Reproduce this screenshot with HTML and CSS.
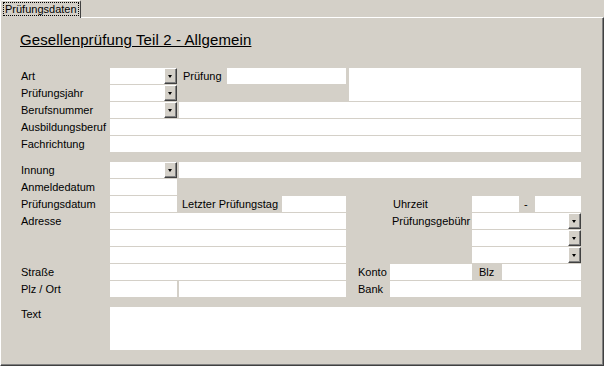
FILE: index.html
```html
<!DOCTYPE html>
<html lang="de">
  <head>
    <meta charset="UTF-8" />
    <meta name="viewport" content="width=device-width, initial-scale=1.0" />
    <title>Prüfungsdaten</title>
    <link rel="stylesheet" href="styles.css">
  </head>
  <body>
    <div class="tabs">
      <div class="tab"><span class="tab--label">Prüfungsdaten</span></div>
    </div>

    <div class="panel">
      <h1 class="title">Gesellenprüfung Teil 2 - Allgemein</h1>

      <div class="form">
        <!-- kopf -->
        <span class="lbl a-lart">Art</span>
        <div class="box combo a-art"><span class="drop"></span></div>
        <span class="lbl a-lpr">Prüfung</span>
        <div class="box a-pr"></div>
        <div class="box a-big"></div>

        <span class="lbl a-ljahr">Prüfungsjahr</span>
        <div class="box combo a-jahr"><span class="drop"></span></div>

        <span class="lbl a-lbnr">Berufsnummer</span>
        <div class="box combo a-bnr"><span class="drop"></span></div>
        <div class="box a-bname"></div>

        <span class="lbl a-lausb">Ausbildungsberuf</span>
        <div class="box a-ausb"></div>

        <span class="lbl a-lfach">Fachrichtung</span>
        <div class="box a-fach"></div>

        <!-- innung / termine -->
        <span class="lbl a-linn">Innung</span>
        <div class="box combo a-inn"><span class="drop"></span></div>
        <div class="box a-iname"></div>

        <span class="lbl a-lanm">Anmeldedatum</span>
        <div class="box a-anm"></div>

        <span class="lbl a-lpd">Prüfungsdatum</span>
        <div class="box a-pd"></div>
        <span class="lbl a-llt">Letzter Prüfungstag</span>
        <div class="box a-lt"></div>
        <span class="lbl a-luhr">Uhrzeit</span>
        <div class="box a-von"></div>
        <span class="lbl a-dash">-</span>
        <div class="box a-bis"></div>

        <span class="lbl a-ladr">Adresse</span>
        <div class="box a-adr1"></div>
        <div class="box a-adr2"></div>
        <div class="box a-adr3"></div>
        <span class="lbl a-lgeb">Prüfungsgebühr</span>
        <div class="box combo a-geb1"><span class="drop"></span></div>
        <div class="box combo a-geb2"><span class="drop"></span></div>
        <div class="box combo a-geb3"><span class="drop"></span></div>

        <span class="lbl a-lstr">Straße</span>
        <div class="box a-str"></div>
        <span class="lbl a-lkonto">Konto</span>
        <div class="box a-konto"></div>
        <span class="lbl a-lblz">Blz</span>
        <div class="box a-blz"></div>

        <span class="lbl a-lplz">Plz / Ort</span>
        <div class="box a-plz"></div>
        <div class="box a-ort"></div>
        <span class="lbl a-lbank">Bank</span>
        <div class="box a-bank"></div>

        <span class="lbl lbl--top a-ltext">Text</span>
        <div class="box a-text"></div>
      </div>
    </div>
  </body>
</html>
```

FILE: styles.css
```css
* {
  box-sizing: border-box;
  margin: 0;
  padding: 0;
}
body {
  width: 604px;
  height: 366px;
  overflow: hidden;
  background-color: #d4d0c8;
  font-family: "Liberation Sans", Arial, sans-serif;
  font-size: 11px;
  color: #000;
}

/* reiter */
.tabs {
  display: flex;
  height: 17px;
}
.tab {
  width: 81px;
  height: 18px;
  padding: 1px 1px 0 2px;
  border-top: 1px solid #fff;
  border-left: 1px solid #fff;
  border-right: 1px solid #404040;
  border-radius: 2px 2px 0 0;
  background-color: #d4d0c8;
  position: relative;
  z-index: 1;
}
.tab--label {
  display: block;
  height: 14px;
  line-height: 12px;
  padding-left: 1px;
  border: 1px dotted #000;
}

.panel {
  height: 349px;
  padding: 13px 0 0 19px;
  border-top: 1px solid #fff;
  border-left: 1px solid #fff;
  border-right: 1px solid #404040;
  border-bottom: 1px solid #404040;
  box-shadow: inset -1px -1px #808080;
}
.title {
  font-size: 15px;
  font-weight: normal;
  line-height: 17px;
  letter-spacing: 0.12px;
  text-decoration: underline;
}

/* formular */
.form {
  display: grid;
  margin: 20px 0 0 1px;
  grid-template-columns: 89px 67px 2px 48px 55px 64px 3px 41px 82px 30px 17px 16px 46px;
  grid-template-rows: repeat(5, 16px) 8px repeat(8, 16px) 8px 43px;
  row-gap: 1px;
  grid-template-areas:
    "lart art . lpr pr pr . big big big big big big"
    "ljahr jahr . . . . . big big big big big big"
    "lbnr bnr . bname bname bname bname bname bname bname bname bname bname"
    "lausb ausb ausb ausb ausb ausb ausb ausb ausb ausb ausb ausb ausb"
    "lfach fach fach fach fach fach fach fach fach fach fach fach fach"
    ". . . . . . . . . . . . ."
    "linn inn . iname iname iname iname iname iname iname iname iname iname"
    "lanm anm . . . . . . . . . . ."
    "lpd pd . llt llt lt . . luhr von von dash bis"
    "ladr adr1 adr1 adr1 adr1 adr1 . . lgeb geb1 geb1 geb1 geb1"
    ". adr2 adr2 adr2 adr2 adr2 . . . geb2 geb2 geb2 geb2"
    ". adr3 adr3 adr3 adr3 adr3 . . . geb3 geb3 geb3 geb3"
    "lstr str str str str str . lkonto konto lblz blz blz blz"
    "lplz plz . ort ort ort . lbank bank bank bank bank bank"
    ". . . . . . . . . . . . ."
    "ltext text text text text text text text text text text text text";
}
.lbl {
  display: flex;
  align-items: center;
  white-space: nowrap;
}
.lbl--top {
  align-items: flex-start;
  padding-top: 1px;
}
.box {
  background-color: #fff;
}
.combo {
  display: flex;
  justify-content: flex-end;
}
.drop {
  width: 13px;
  height: 16px;
  display: flex;
  align-items: center;
  justify-content: center;
  background-color: #d4d0c8;
  border-top: 1px solid #fff;
  border-left: 1px solid #fff;
  border-right: 1px solid #404040;
  border-bottom: 1px solid #404040;
  box-shadow: inset -1px -1px #808080;
}
.drop::after {
  content: "";
  border-left: 2px solid transparent;
  border-right: 2px solid transparent;
  border-top: 3px solid #000;
  margin: 1px 1px 0 0;
}

.a-lart { grid-area: lart; }
.a-art { grid-area: art; }
.a-lpr { grid-area: lpr; padding-left: 4px; }
.a-pr { grid-area: pr; }
.a-big { grid-area: big; }
.a-ljahr { grid-area: ljahr; }
.a-jahr { grid-area: jahr; }
.a-lbnr { grid-area: lbnr; }
.a-bnr { grid-area: bnr; }
.a-bname { grid-area: bname; }
.a-lausb { grid-area: lausb; }
.a-ausb { grid-area: ausb; }
.a-lfach { grid-area: lfach; }
.a-fach { grid-area: fach; }
.a-linn { grid-area: linn; }
.a-inn { grid-area: inn; }
.a-iname { grid-area: iname; }
.a-lanm { grid-area: lanm; }
.a-anm { grid-area: anm; }
.a-lpd { grid-area: lpd; }
.a-pd { grid-area: pd; }
.a-llt { grid-area: llt; padding-left: 3px; }
.a-lt { grid-area: lt; }
.a-luhr { grid-area: luhr; padding-left: 3px; }
.a-von { grid-area: von; }
.a-dash { grid-area: dash; padding-left: 5px; }
.a-bis { grid-area: bis; }
.a-ladr { grid-area: ladr; }
.a-adr1 { grid-area: adr1; }
.a-adr2 { grid-area: adr2; }
.a-adr3 { grid-area: adr3; }
.a-lgeb { grid-area: lgeb; padding-left: 2px; }
.a-geb1 { grid-area: geb1; }
.a-geb2 { grid-area: geb2; }
.a-geb3 { grid-area: geb3; }
.a-lstr { grid-area: lstr; }
.a-str { grid-area: str; }
.a-lkonto { grid-area: lkonto; padding-left: 9px; }
.a-konto { grid-area: konto; }
.a-lblz { grid-area: lblz; padding-left: 7px; }
.a-blz { grid-area: blz; }
.a-lplz { grid-area: lplz; }
.a-plz { grid-area: plz; }
.a-ort { grid-area: ort; }
.a-lbank { grid-area: lbank; padding-left: 9px; }
.a-bank { grid-area: bank; }
.a-ltext { grid-area: ltext; }
.a-text { grid-area: text; }
```
